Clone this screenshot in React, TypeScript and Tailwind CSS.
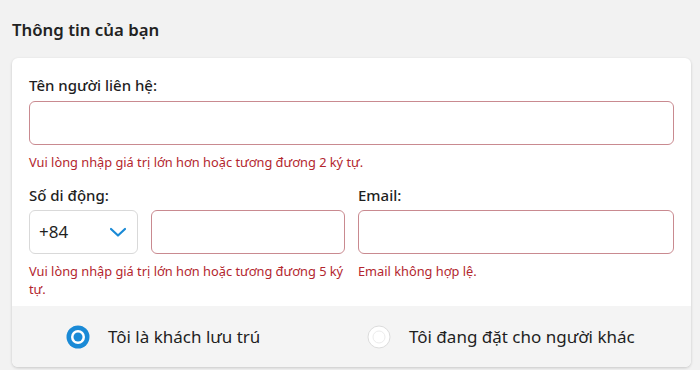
import React from "react";

const font = { fontFamily: "'Noto Sans', Lato, sans-serif" };

function Chevron() {
  return (
    <svg width="18" height="12" viewBox="0 0 18 12" fill="none">
      <path d="M2 3l7 6.5L16 3" stroke="#1a8ad6" strokeWidth="2.2" strokeLinecap="round" strokeLinejoin="round" />
    </svg>
  );
}

export default function App() {
  return (
    <div className="w-[700px] h-[370px] bg-[#f2f2f2] overflow-hidden text-[#1f1f1f]" style={font}>
      <div className="px-[12px] pt-[18px]">
        <h2 className="text-[16.8px] font-semibold leading-[24px] text-[#222]">Thông tin của bạn</h2>
        <div className="mt-[16px] w-[679px] bg-white rounded-[6px] shadow-[0_1px_3px_rgba(0,0,0,0.18)] overflow-hidden">
          <div className="px-[17px] pt-[17px] pb-[8px]">
            <label className="block text-[15px] font-medium leading-[20px]">Tên người liên hệ:</label>
            <div className="mt-[6px] h-[44px] w-[645px] rounded-[6px] border border-[#c98a90] bg-white"></div>
            <p className="mt-[8px] text-[12.8px] leading-[18px] text-[#b3262e]">
              Vui lòng nhập giá trị lớn hơn hoặc tương đương 2 ký tự.
            </p>
            <div className="mt-[14px] flex gap-[13px]">
              <div className="w-[316px]">
                <label className="block text-[15px] font-medium leading-[20px]">Số di động:</label>
                <div className="mt-[5px] flex gap-[13px]">
                  <div className="h-[44px] w-[109px] rounded-[6px] border border-[#d9d9d9] flex items-center justify-between pl-[9px] pr-[10px]">
                    <span className="text-[17px]">+84</span>
                    <Chevron />
                  </div>
                  <div className="h-[44px] w-[194px] rounded-[6px] border border-[#c98a90]"></div>
                </div>
                <p className="mt-[8px] text-[12.8px] leading-[18px] text-[#b3262e]">
                  Vui lòng nhập giá trị lớn hơn hoặc tương đương 5 ký tự.
                </p>
              </div>
              <div className="flex-1">
                <label className="block text-[15px] font-medium leading-[20px]">Email:</label>
                <div className="mt-[5px] h-[44px] w-[316px] rounded-[6px] border border-[#c98a90]"></div>
                <p className="mt-[8px] text-[12.8px] leading-[18px] text-[#b3262e]">Email không hợp lệ.</p>
              </div>
            </div>
          </div>
          <div className="bg-[#f4f4f4] h-[61px] flex items-center">
            <div className="flex items-center pl-[54px] w-[355px]">
              <svg width="24" height="24" viewBox="0 0 24 24">
                <circle cx="12" cy="12" r="11.5" fill="#1a8ad6" />
                <circle cx="12" cy="12" r="7" fill="#fff" />
                <circle cx="12" cy="12" r="4.5" fill="#1a8ad6" />
              </svg>
              <span className="ml-[18px] text-[17px]">Tôi là khách lưu trú</span>
            </div>
            <div className="flex items-center">
              <svg width="24" height="24" viewBox="0 0 24 24">
                <circle cx="12" cy="12" r="11" fill="#fff" stroke="#dcdcdc" strokeWidth="1" />
                <circle cx="12" cy="12" r="6" fill="none" stroke="#ececec" strokeWidth="1" />
              </svg>
              <span className="ml-[18px] text-[17px]">Tôi đang đặt cho người khác</span>
            </div>
          </div>
        </div>
      </div>
    </div>
  );
}
